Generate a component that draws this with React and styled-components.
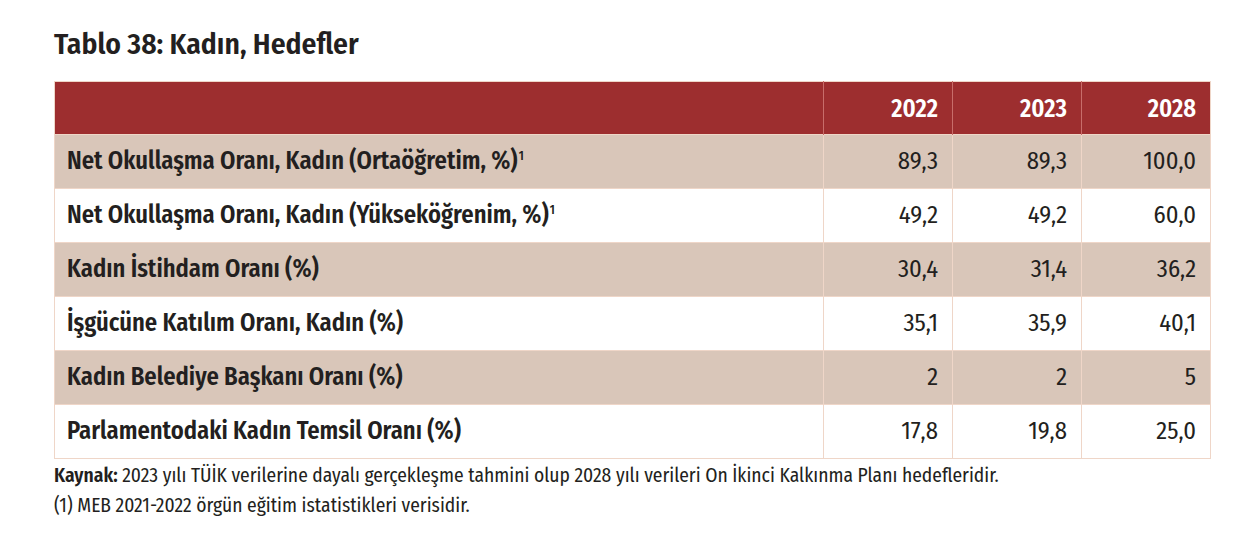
import React from 'react'
import styled, { createGlobalStyle } from 'styled-components'

const GlobalStyle = createGlobalStyle`
  html, body {
    margin: 0;
    padding: 0;
    background: #ffffff;
  }
  body {
    font-family: 'Fira Sans Condensed', 'Open Sans', sans-serif;
    color: #231f20;
  }
`

const Page = styled.div`
  width: 1254px;
  height: 538px;
  box-sizing: border-box;
  padding: 26px 0 0 54px;
  overflow: hidden;
`

const Title = styled.h1`
  margin: 0;
  font-size: 29.5px;
  line-height: 36px;
  font-weight: 600;
  color: #231f20;
`

const Table = styled.table`
  margin-top: 19px;
  width: 1157px;
  border-collapse: collapse;
  table-layout: fixed;
  border: 1px solid #efd6c8;
`

const LabelCol = styled.col`
  width: 769px;
`

const YearCol = styled.col`
  width: 129px;
`

const HeadCell = styled.th`
  height: 52px;
  padding: 0 14px 0 12px;
  background: #9d2e2f;
  color: #ffffff;
  font-size: 24.5px;
  font-weight: 600;
  text-align: right;
  vertical-align: middle;
  border-left: 1px solid #c86d6a;
  &:first-child {
    border-left: none;
  }
`

const Row = styled.tr`
  background: ${(p) => (p.$shaded ? '#d9c6b9' : '#ffffff')};
`

const Label = styled.td`
  height: 51px;
  padding: 0 12px 2px;
  font-size: 24.5px;
  line-height: 30px;
  font-weight: 600;
  text-align: left;
  vertical-align: middle;
  border-top: 1px solid #efd6c8;
  white-space: nowrap;
`

const Value = styled.td`
  padding: 0 14px 2px 8px;
  font-size: 24.5px;
  line-height: 30px;
  font-weight: 400;
  text-align: right;
  vertical-align: middle;
  border-top: 1px solid #efd6c8;
  border-left: 1px solid #efd6c8;
`

const Sup = styled.sup`
  font-size: 12px;
  font-weight: 600;
  vertical-align: 9px;
  line-height: 0;
  margin-left: 1px;
`

const Notes = styled.div`
  margin-top: 2px;
  font-size: 19.5px;
  line-height: 30px;
  color: #231f20;
`

const NoteLine = styled.p`
  margin: 0;
`

const Strong = styled.strong`
  font-weight: 600;
`

const rows = [
  { label: 'Net Okullaşma Oranı, Kadın (Ortaöğretim, %)', sup: true, values: ['89,3', '89,3', '100,0'] },
  { label: 'Net Okullaşma Oranı, Kadın (Yükseköğrenim, %)', sup: true, values: ['49,2', '49,2', '60,0'] },
  { label: 'Kadın İstihdam Oranı (%)', values: ['30,4', '31,4', '36,2'] },
  { label: 'İşgücüne Katılım Oranı, Kadın (%)', values: ['35,1', '35,9', '40,1'] },
  { label: 'Kadın Belediye Başkanı Oranı (%)', values: ['2', '2', '5'] },
  { label: 'Parlamentodaki Kadın Temsil Oranı (%)', values: ['17,8', '19,8', '25,0'] },
]

const years = ['2022', '2023', '2028']

const App = () => {
  return (
    <>
      <GlobalStyle />
      <Page>
        <Title>Tablo 38: Kadın, Hedefler</Title>
        <Table>
          <colgroup>
            <LabelCol />
            {years.map((year) => (
              <YearCol key={year} />
            ))}
          </colgroup>
          <thead>
            <tr>
              <HeadCell />
              {years.map((year) => (
                <HeadCell key={year}>{year}</HeadCell>
              ))}
            </tr>
          </thead>
          <tbody>
            {rows.map((row, index) => (
              <Row key={row.label} $shaded={index % 2 === 0}>
                <Label>
                  {row.label}
                  {row.sup && <Sup>1</Sup>}
                </Label>
                {row.values.map((value, i) => (
                  <Value key={i}>{value}</Value>
                ))}
              </Row>
            ))}
          </tbody>
        </Table>
        <Notes>
          <NoteLine>
            <Strong>Kaynak:</Strong> 2023 yılı TÜİK verilerine dayalı gerçekleşme tahmini olup 2028 yılı verileri On
            İkinci Kalkınma Planı hedefleridir.
          </NoteLine>
          <NoteLine>(1) MEB 2021-2022 örgün eğitim istatistikleri verisidir.</NoteLine>
        </Notes>
      </Page>
    </>
  )
}

export default App
